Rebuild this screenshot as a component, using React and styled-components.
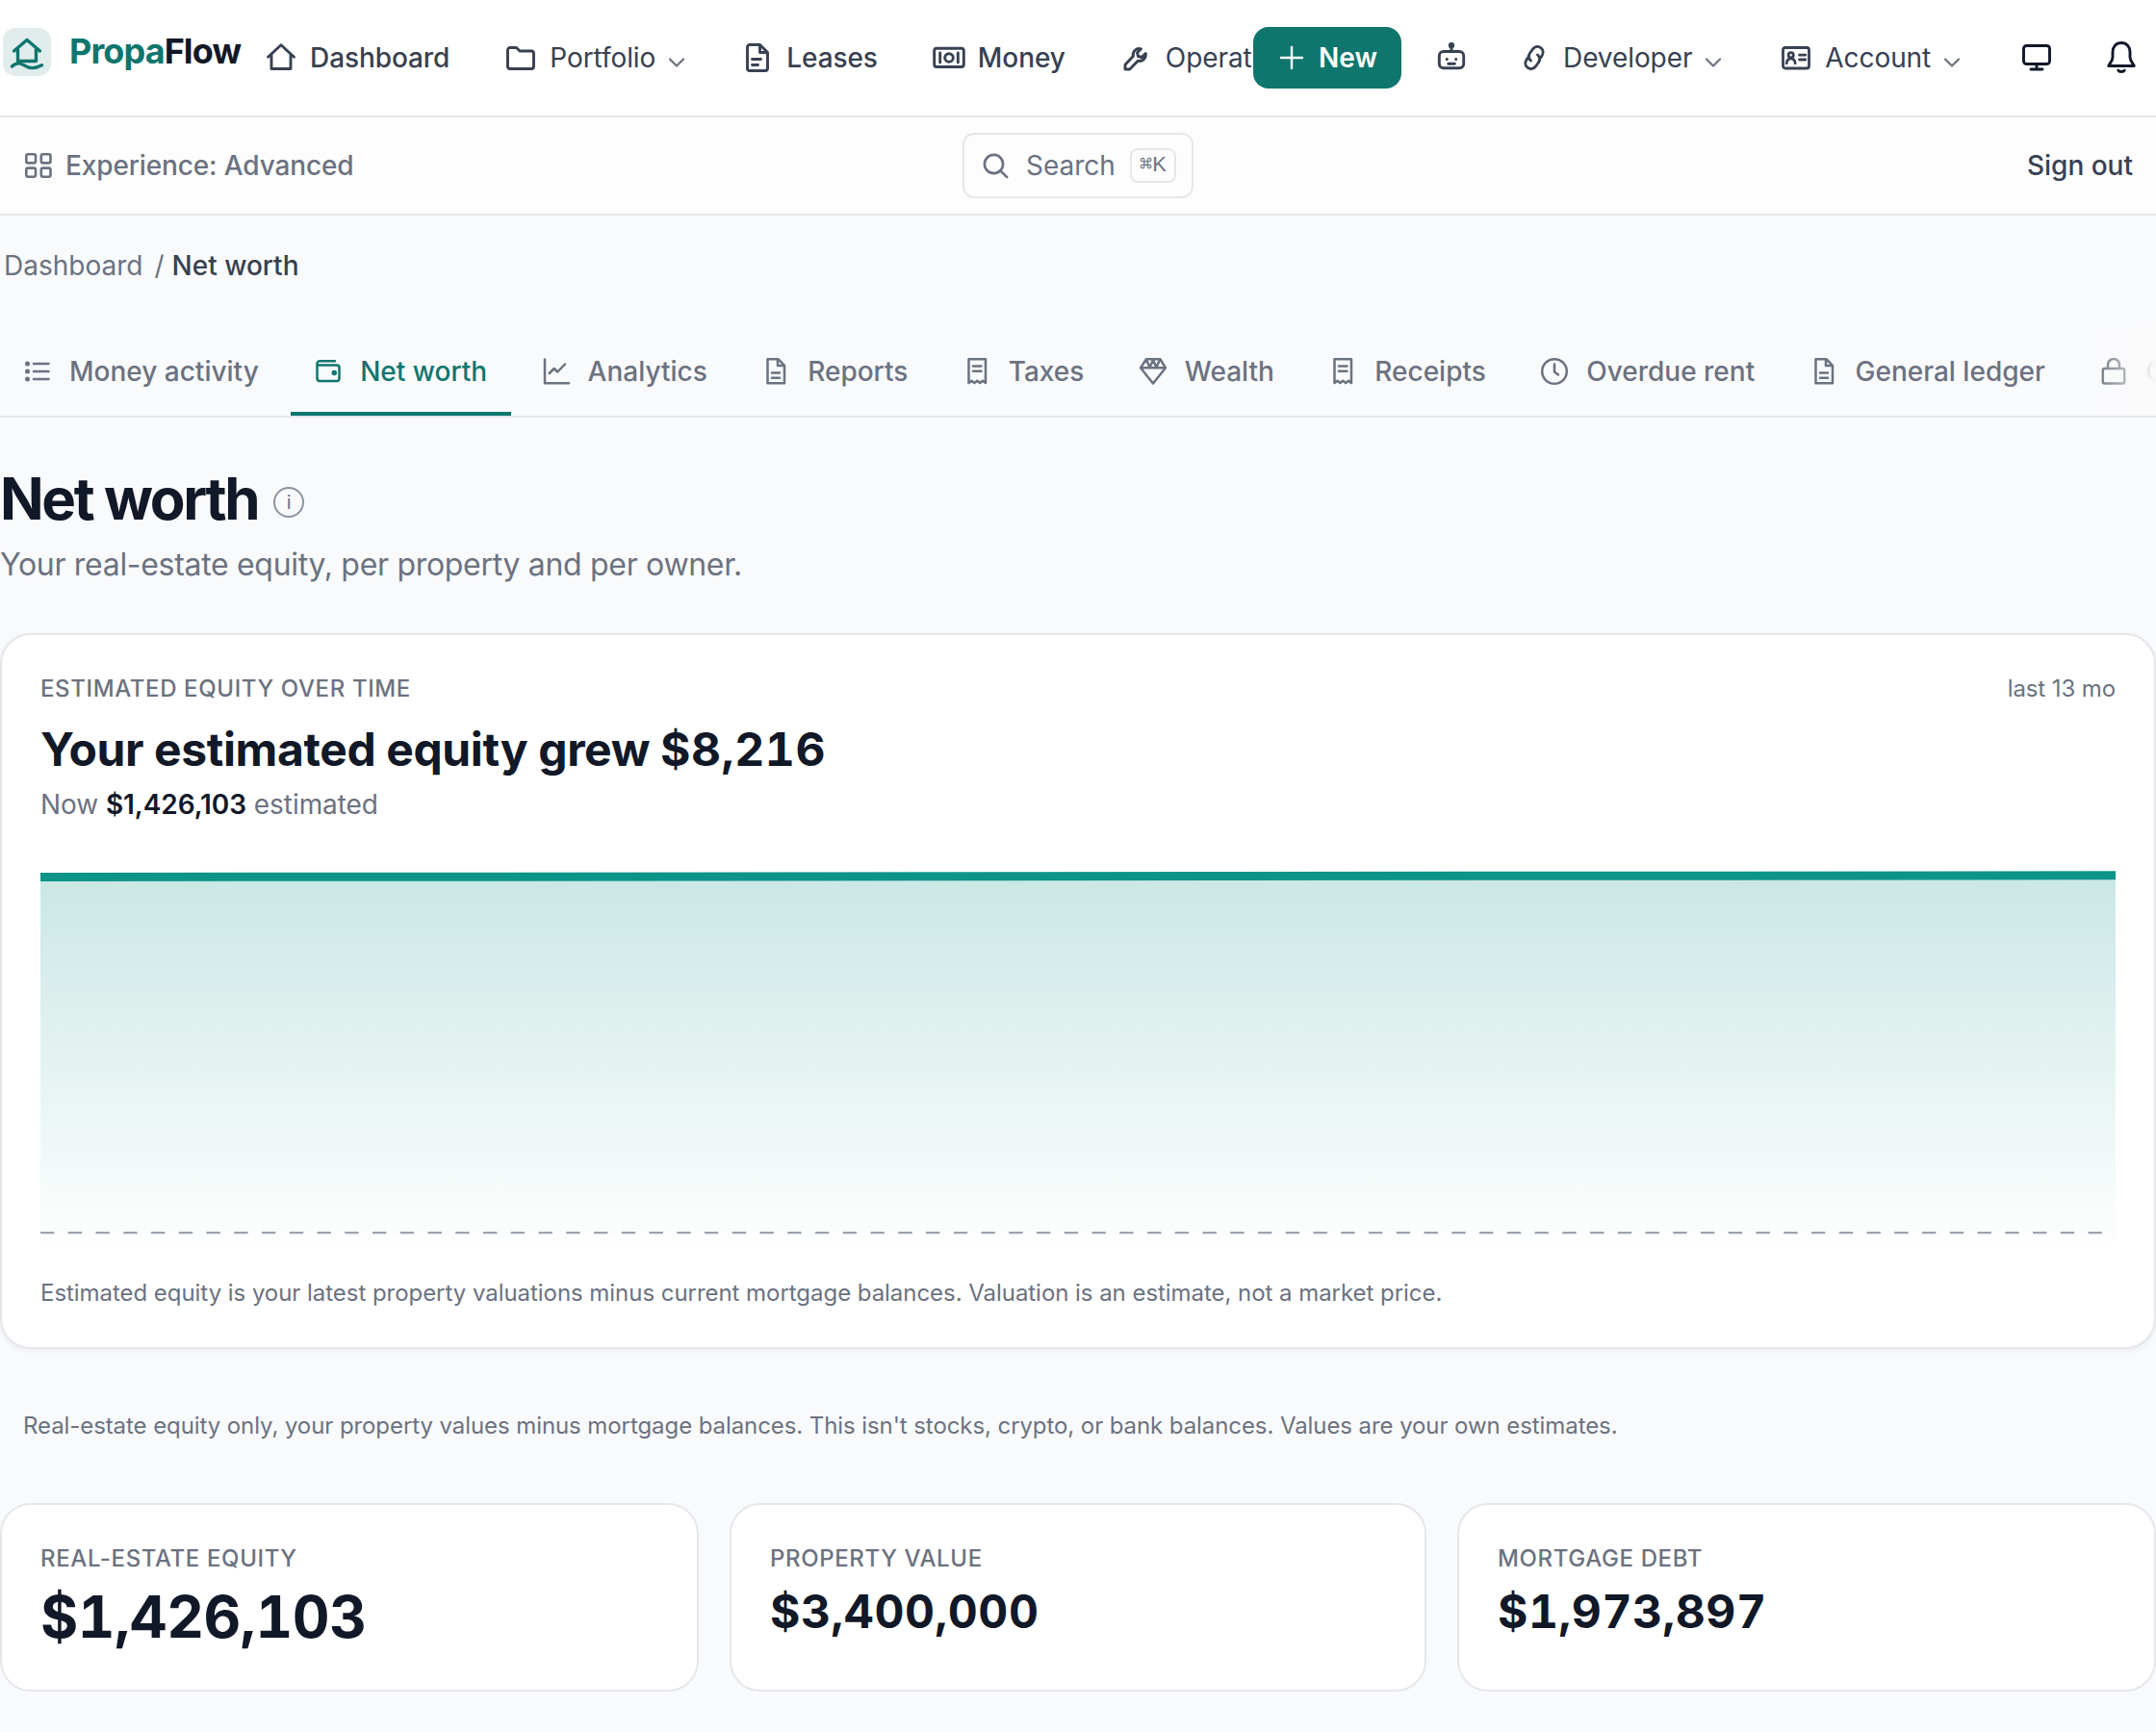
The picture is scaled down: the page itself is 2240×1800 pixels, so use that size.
import styled, { createGlobalStyle } from 'styled-components';

const icons = {
  home: <path d="M2.5 15.2 16 2.8l13.5 12.4M6 12.5V27.5H26V12.5" />,
  folder: (
    <path d="M2.5 8A2.5 2.5 0 0 1 5 5.5h6.5L15 9h12a2.5 2.5 0 0 1 2.5 2.5V25a2.5 2.5 0 0 1-2.5 2.5H5A2.5 2.5 0 0 1 2.5 25z" />
  ),
  file: (
    <path d="M8 2.5h10.5l8 8V27a2.5 2.5 0 0 1-2.5 2.5H8A2.5 2.5 0 0 1 5.5 27V5A2.5 2.5 0 0 1 8 2.5zM18.5 3v7.5H26M10.5 17.5h9M10.5 23.5h6" />
  ),
  money: (
    <>
      <rect x="0.7" y="6.3" width="30.6" height="19.2" rx="2.5" />
      <circle cx="16" cy="16" r="4.3" />
      <path d="M6.7 11v10M25.3 11v10" />
    </>
  ),
  wrench: (
    <path d="M20.5 6.8l-4 4 1 3.7 3.7 1 4-4a6.5 6.5 0 0 1-8 7.7L8.7 28H4v-4.7l8.3-8.8a6.5 6.5 0 0 1 8.2-7.7z" />
  ),
  plus: <path d="M16 5v22M5 16h22" />,
  robot: (
    <>
      <rect x="3.3" y="9.5" width="25.4" height="17.2" rx="4.5" />
      <path d="M16 3v6M12.8 22.2h6.6" />
      <circle cx="16" cy="3.2" r="1.7" />
      <path d="M11.3 17.5v.2M20.7 17.5v.2" />
    </>
  ),
  link: (
    <path d="M12.5 19c-3-2.5-2.5-5.800-.5-8.500l2.500-3.500c2.500-3 6-3.200 8.500-1.200s2.800 5.500.8 8.500L21.500 17.500M19.500 13c3 2.500 2.500 5.800.5 8.500l-2.500 3.500c-2.500 3-6 3.200-8.500 1.200s-2.800-5.500-.8-8.500l2.300-3.200" />
  ),
  idCard: (
    <>
      <rect x="2.5" y="5.5" width="27" height="21.5" rx="2.5" />
      <circle cx="10.7" cy="13.3" r="2.6" />
      <path d="M6.2 21.8c.3-3 2-5 4.5-5s4.2 2 4.5 5M19.5 13.2h6.3M19.5 18h6.3" />
    </>
  ),
  monitor: (
    <>
      <rect x="2.5" y="3.5" width="27" height="19" rx="3" />
      <path d="M16 22.5V28M10 28h12" />
    </>
  ),
  bell: (
    <path d="M16 .5c-5.5 0-9 4-9 9.5v5.5c0 3-2 5-4.3 9h26.6c-2.3-4-4.3-6-4.3-9V10C25 4.5 21.5.5 16 .5zM12.8 29.2c.8 1.8 5.6 1.8 6.4 0" />
  ),
  grid: (
    <>
      <rect x="3.3" y="4.2" width="9.7" height="9.2" rx="2" />
      <rect x="18.8" y="4.2" width="9.7" height="9.2" rx="2" />
      <rect x="3.3" y="18.6" width="9.7" height="9.2" rx="2" />
      <rect x="18.8" y="18.6" width="9.7" height="9.2" rx="2" />
    </>
  ),
  search: (
    <>
      <circle cx="14.5" cy="14.5" r="9.6" />
      <path d="M21.5 21.5l6.7 6.7" />
    </>
  ),
  list: (
    <>
      <path d="M12 8h15.5M12 16h15.5M12 24h15.5" />
      <path d="M5.5 8v.1M5.5 16v.1M5.5 24v.1" strokeWidth="5" />
    </>
  ),
  wallet: (
    <>
      <path d="M23 5.3H7A2.5 2.5 0 0 0 4.5 7.8v15.7A2.5 2.5 0 0 0 7 26h18a2.5 2.5 0 0 0 2.5-2.5V12A2.5 2.5 0 0 0 25 9.5H5" />
      <circle cx="22.3" cy="17.5" r="1.5" />
    </>
  ),
  chart: <path d="M4 3.5v24.7h25M8.7 18l5-5 3.6 3.5L25 8.5" />,
  doc: <path d="M7.5 3.2h11l6.5 6.7v18.4H7.5zM18 3.5V10h6.5M12 17.5h8M12 22.8h8" />,
  receipt: (
    <path d="M7.5 28V3.2H25V28l-2.9-2.2-2.9 2.2-2.9-2.2-2.9 2.2-2.9-2.2zM12 10.5h8.5M12 15.8h8.5" />
  ),
  diamond: (
    <path d="M9 3.3h14.5l5.5 9L16 28.5 3 12.3zM3.5 12.3h25M9 3.5l3.5 8.5L16 4l3.5 8L23 3.5" />
  ),
  clock: (
    <>
      <circle cx="16" cy="16" r="12.8" />
      <path d="M16 8.5V16.5l4 3" />
    </>
  ),
  lock: (
    <>
      <rect x="4.8" y="13" width="22.4" height="15.5" rx="2" />
      <path d="M10 13V9a6 6 0 0 1 12 0v4" />
    </>
  ),
};

const Icon = ({ name, weight = 2.9 }) => (
  <IconSvg viewBox="0 0 32 32" strokeWidth={weight}>
    {icons[name]}
  </IconSvg>
);

const ChevronDown = () => (
  <Chevron viewBox="0 0 16 16" strokeWidth="2.2">
    <path d="M1 4.5l7 7 7-7" />
  </Chevron>
);

const tabs = [
  { label: 'Money activity', icon: 'list' },
  { label: 'Net worth', icon: 'wallet', active: true },
  { label: 'Analytics', icon: 'chart' },
  { label: 'Reports', icon: 'doc' },
  { label: 'Taxes', icon: 'receipt' },
  { label: 'Wealth', icon: 'diamond' },
  { label: 'Receipts', icon: 'receipt' },
  { label: 'Overdue rent', icon: 'clock' },
  { label: 'General ledger', icon: 'doc' },
  { label: 'Close', icon: 'lock' },
];

const stats = [
  { label: 'Real-estate equity', value: '$1,426,103', large: true },
  { label: 'Property value', value: '$3,400,000' },
  { label: 'Mortgage debt', value: '$1,973,897' },
];

const EquityChart = () => (
  <Chart viewBox="0 0 2156 412">
    <defs>
      <linearGradient id="equityFill" x1="0" y1="0" x2="0" y2="1">
        <stop offset="0" stopColor="#0d9488" stopOpacity="0.22" />
        <stop offset="1" stopColor="#0d9488" stopOpacity="0" />
      </linearGradient>
    </defs>
    <path d="M0 21.5L2156 19.8V412H0z" fill="url(#equityFill)" />
    <path d="M0 391.2H2156" stroke="#9ca3af" strokeWidth="2.2" strokeDasharray="14.375 14.375" />
    <path d="M0 21.5L2156 19.8" stroke="#0d9488" strokeWidth="9" />
  </Chart>
);

const App = () => (
  <>
    <GlobalStyle />
    <Header>
      <Brand>
        <LogoTile>
          <svg width="36" height="36" viewBox="0 0 36 36">
            <path d="M4.5 15L18 3.5 31.5 15M8.5 13v12.5h19V13" />
            <path d="M2.5 31c5-5 9-3.5 13-.8s9 4.3 18-.5" />
          </svg>
        </LogoTile>
        <BrandName>
          <span>Propa</span>Flow
        </BrandName>
      </Brand>
      <Nav>
        <NavItem $strong>
          <Icon name="home" />
          Dashboard
        </NavItem>
        <NavItem>
          <Icon name="folder" />
          Portfolio
          <ChevronDown />
        </NavItem>
        <NavItem $strong>
          <Icon name="file" />
          Leases
        </NavItem>
        <NavItem $strong>
          <Icon name="money" />
          Money
        </NavItem>
        <NavItem>
          <Icon name="wrench" />
          Operations
          <ChevronDown />
        </NavItem>
      </Nav>
      <Actions>
        <NewButton>
          <Icon name="plus" weight={2.4} />
          New
        </NewButton>
        <IconButton>
          <Icon name="robot" />
        </IconButton>
        <NavItem>
          <Icon name="link" />
          Developer
          <ChevronDown />
        </NavItem>
        <NavItem>
          <Icon name="idCard" weight={2.8} />
          Account
          <ChevronDown />
        </NavItem>
        <SystemButtons>
          <IconButton $dark>
            <Icon name="monitor" />
          </IconButton>
          <IconButton $dark>
            <Icon name="bell" />
          </IconButton>
        </SystemButtons>
      </Actions>
    </Header>

    <SubBar>
      <Experience>
        <Icon name="grid" weight={2.6} />
        Experience: Advanced
      </Experience>
      <SearchBox>
        <Icon name="search" weight={2.6} />
        Search
        <Kbd>⌘K</Kbd>
      </SearchBox>
      <SignOut>Sign out</SignOut>
    </SubBar>

    <Breadcrumb>
      Dashboard<i>/</i>
      <b>Net worth</b>
    </Breadcrumb>

    <Tabs>
      {tabs.map(({ label, icon, active }) => (
        <Tab key={label} $active={active}>
          <Icon name={icon} weight={2.5} />
          {label}
        </Tab>
      ))}
    </Tabs>

    <TitleRow>
      <Title>Net worth</Title>
      <InfoBadge>i</InfoBadge>
    </TitleRow>
    <Subtitle>Your real-estate equity, per property and per owner.</Subtitle>

    <EquityCard>
      <CardTop>
        <Label>Estimated equity over time</Label>
        <Period>last 13 mo</Period>
      </CardTop>
      <Headline>
        Your estimated equity grew <span>$8,216</span>
      </Headline>
      <Current>
        Now <b>$1,426,103</b> estimated
      </Current>
      <EquityChart />
      <Footnote>
        Estimated equity is your latest property valuations minus current mortgage balances. Valuation is an
        estimate, not a market price.
      </Footnote>
    </EquityCard>

    <Disclaimer>
      Real-estate equity only, your property values minus mortgage balances. This isn't stocks, crypto, or bank
      balances. Values are your own estimates.
    </Disclaimer>

    <Stats>
      {stats.map(({ label, value, large }) => (
        <StatCard key={label}>
          <Label>{label}</Label>
          <StatValue $large={large}>{value}</StatValue>
        </StatCard>
      ))}
    </Stats>
  </>
);

const GlobalStyle = createGlobalStyle`
  * {
    box-sizing: border-box;
  }

  body {
    margin: 0;
    background: #f9fafc;
    color: #111827;
    font-family: Inter, 'Liberation Sans', sans-serif;
    font-size: 28px;
    line-height: 40px;
    overflow: hidden;
  }

  p, h1, h2 {
    margin: 0;
  }
`;

const IconSvg = styled.svg`
  width: 32px;
  height: 32px;
  flex: none;
  fill: none;
  stroke: currentColor;
  stroke-linecap: round;
  stroke-linejoin: round;
  overflow: visible;
`;

const Chevron = styled.svg`
  width: 16px;
  height: 16px;
  flex: none;
  margin: 10px 2px 0 0;
  fill: none;
  stroke: #6b7280;
  stroke-linecap: round;
  stroke-linejoin: round;
`;

const Header = styled.header`
  display: grid;
  grid-template-columns: 248px 1054px 1fr;
  align-items: center;
  height: 122px;
  background: #fff;
  border-bottom: 2px solid #e5e7eb;
`;

const Brand = styled.div`
  display: flex;
  align-items: center;
  gap: 19px;
  padding-left: 3px;
  margin-bottom: 12px;
`;

const LogoTile = styled.div`
  display: flex;
  align-items: center;
  justify-content: center;
  width: 50px;
  height: 50px;
  flex: none;
  padding-top: 4px;
  border-radius: 13px;
  background: #e1edec;

  svg {
    fill: none;
    stroke: #0f766e;
    stroke-width: 3.4;
    stroke-linecap: round;
    stroke-linejoin: round;
  }
`;

const BrandName = styled.div`
  margin-top: -2px;
  font-size: 36px;
  font-weight: 700;
  letter-spacing: -0.9px;

  span {
    color: #0f766e;
  }
`;

const Nav = styled.nav`
  display: flex;
  gap: 2px;
  overflow: hidden;
`;

const NavItem = styled.a`
  display: flex;
  align-items: center;
  flex: none;
  gap: 14px;
  height: 64px;
  padding: 0 28px;
  color: #374151;
  font-weight: ${({ $strong }) => ($strong ? 500 : 400)};
  letter-spacing: -0.08px;
  white-space: nowrap;
`;

const Actions = styled.div`
  display: flex;
  align-items: center;

  ${NavItem} + ${NavItem} {
    margin-left: 4px;
  }
`;

const SystemButtons = styled.div`
  display: flex;
  gap: 16px;
  margin-left: auto;
`;

const NewButton = styled.button`
  display: flex;
  align-items: center;
  gap: 12px;
  width: 154px;
  height: 64px;
  padding: 0 0 0 24px;
  border: 0;
  border-radius: 16px;
  background: #0f766e;
  color: #fff;
  font: 600 28px Inter, sans-serif;
`;

const IconButton = styled.button`
  display: flex;
  align-items: center;
  justify-content: center;
  width: 72px;
  height: 64px;
  margin: ${({ $dark }) => ($dark ? '0' : '0 6px 0 16px')};
  padding: 0;
  border: 0;
  background: none;
  color: ${({ $dark }) => ($dark ? '#111827' : '#374151')};
`;

const SubBar = styled.div`
  display: grid;
  grid-template-columns: 1fr 240px 1fr;
  align-items: center;
  height: 102px;
  padding: 0 24px;
  background: #fdfdfd;
  border-bottom: 2px solid #e5e7eb;
`;

const Experience = styled.div`
  display: flex;
  align-items: center;
  gap: 12px;
  color: #6b7280;
  font-weight: 500;
  letter-spacing: -0.13px;
`;

const SearchBox = styled.div`
  display: flex;
  align-items: center;
  height: 68px;
  padding-left: 16px;
  gap: 16px;
  border: 2px solid #e5e7eb;
  border-radius: 12px;
  color: #6b7280;
`;

const Kbd = styled.kbd`
  width: 48px;
  height: 36px;
  margin-left: -1px;
  border: 2px solid #e5e7eb;
  border-radius: 8px;
  font: 22px/30px 'Liberation Sans', 'DejaVu Sans Mono', sans-serif;
  text-align: center;
`;

const SignOut = styled.a`
  justify-self: end;
  color: #374151;
  font-weight: 500;
`;

const Breadcrumb = styled.div`
  margin: 32px 0 0 4px;
  color: #6b7280;

  i {
    margin: 0 8px 0 12px;
    font-style: normal;
  }

  b {
    color: #374151;
    font-weight: 500;
  }
`;

const Tabs = styled.div`
  display: flex;
  gap: 8px;
  position: relative;
  height: 94px;
  margin-top: 44px;
  border-bottom: 2px solid #e5e7eb;
  overflow: hidden;

  &::after {
    content: '';
    position: absolute;
    top: 0;
    right: 0;
    bottom: -2px;
    width: 64px;
    background: linear-gradient(to right, rgba(250, 250, 251, 0), #fafafb);
  }
`;

const Tab = styled.a`
  display: flex;
  align-items: center;
  flex: none;
  gap: 17px;
  height: 92px;
  padding: 4px 24.4px 0 23px;
  border-bottom: 4px solid ${({ $active }) => ($active ? '#0f766e' : 'transparent')};
  color: ${({ $active }) => ($active ? '#0f766e' : '#6b7280')};
  font-weight: 500;
  white-space: nowrap;

  &:first-child {
    margin-right: 1px;
  }
`;

const TitleRow = styled.div`
  display: flex;
  align-items: center;
  gap: 16px;
  height: 72px;
  margin-top: 48px;
`;

const Title = styled.h1`
  font-size: 60px;
  line-height: 72px;
  font-weight: 700;
  letter-spacing: -2.4px;
`;

const InfoBadge = styled.span`
  width: 32px;
  height: 32px;
  margin-top: 8px;
  border: 2px solid #8b93a1;
  border-radius: 50%;
  color: #6b7280;
  font-size: 20px;
  line-height: 28px;
  text-align: center;
`;

const Subtitle = styled.p`
  margin-top: 9px;
  color: #6b7280;
  font-size: 32px;
  line-height: 48px;
  letter-spacing: -0.31px;
`;

const EquityCard = styled.section`
  height: 744px;
  margin-top: 47px;
  padding: 40px 40px 0;
  background: #fff;
  border: 2px solid #e5e7eb;
  border-radius: 32px;
  box-shadow: 0 2px 6px rgba(17, 24, 39, 0.06);
`;

const CardTop = styled.div`
  display: flex;
  justify-content: space-between;
`;

const Label = styled.div`
  color: #6b7280;
  font-size: 24px;
  line-height: 32px;
  font-weight: 500;
  letter-spacing: 0.62px;
  text-transform: uppercase;
`;

const Period = styled.div`
  color: #6b7280;
  font-size: 24px;
  line-height: 32px;
  letter-spacing: -0.1px;
`;

const Headline = styled.h2`
  margin-top: 17px;
  font-size: 48px;
  line-height: 60px;
  font-weight: 700;
  letter-spacing: -0.39px;

  span {
    letter-spacing: 0.6px;
    font-variant-numeric: tabular-nums;
  }
`;

const Current = styled.p`
  margin-top: 7px;
  color: #6b7280;
  letter-spacing: -0.06px;

  b {
    color: #111827;
    font-weight: 600;
  }
`;

const Chart = styled.svg`
  display: block;
  width: 100%;
  height: 412px;
  margin-top: 34px;
  fill: none;
`;

const Footnote = styled.p`
  margin-top: 26px;
  color: #6b7280;
  font-size: 24px;
  line-height: 32px;
  letter-spacing: -0.045px;
`;

const Disclaimer = styled.p`
  margin: 64px 24px 0;
  color: #6b7280;
  font-size: 24px;
  line-height: 32px;
  letter-spacing: -0.082px;
`;

const Stats = styled.div`
  display: grid;
  grid-template-columns: 726px 1fr 726px;
  gap: 32px;
  margin-top: 64px;
`;

const StatCard = styled.div`
  height: 196px;
  padding: 40px 40px 0;
  background: #fff;
  border: 2px solid #e5e7eb;
  border-radius: 32px;
`;

const StatValue = styled.div`
  margin-top: ${({ $large }) => ($large ? 11 : 9)}px;
  font-size: ${({ $large }) => ($large ? 60 : 48)}px;
  line-height: ${({ $large }) => ($large ? 66 : 60)}px;
  font-weight: 700;
  font-variant-numeric: tabular-nums;
  letter-spacing: ${({ $large }) => ($large ? '-0.45px' : '0.5px')};
`;

export default App;
